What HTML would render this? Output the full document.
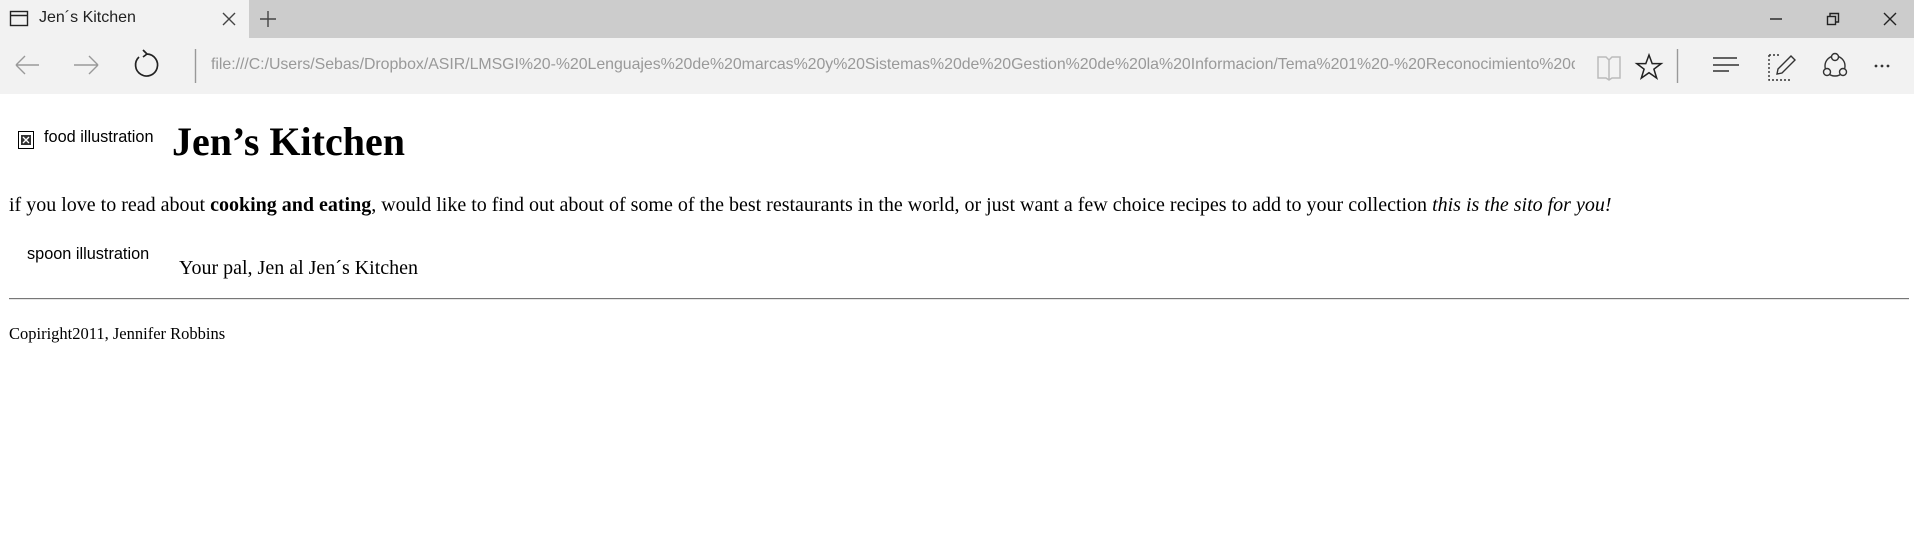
<!DOCTYPE html>
<html><head><meta charset="utf-8"><style>
body{margin:0;width:1914px;height:551px;background:#fff;position:relative;overflow:hidden;font-family:"Liberation Serif",serif;color:#000}
.a{position:absolute;white-space:nowrap}
.s{font-family:"Liberation Sans",sans-serif}
</style></head><body>
<div class="a" style="left:0;top:0;width:1914px;height:38px;background:#cccccc"></div>
<div class="a" style="left:0;top:0;width:249px;height:38px;background:#f2f2f2"></div>
<div class="a" style="left:0;top:38px;width:1914px;height:56px;background:#f2f2f2"></div>
<svg class="a" style="left:0;top:0" width="1914" height="94" fill="none" stroke-width="1.4">
<rect x="10.5" y="11.5" width="17" height="14" stroke="#222"/><line x1="10" y1="15.5" x2="28" y2="15.5" stroke="#222"/>
<path d="M223 13l12 12M235 13l-12 12" stroke="#444"/>
<path d="M268 11v16M260 19h16" stroke="#444"/>
<path d="M1770 19h12" stroke="#222"/>
<rect x="1827.5" y="16.5" width="8" height="8" stroke="#222"/><path d="M1830 16v-2.5h8.5v8.5h-2.5" stroke="#222"/>
<path d="M1884 13l12 12M1896 13l-12 12" stroke="#222"/>
<path d="M39 65h-23M16 65l9-9M16 65l9 9" stroke="#999"/>
<path d="M74 65h24M98 65l-9-9M98 65l-9 9" stroke="#999"/>
<path d="M139 57a11 11 0 1 0 8-3M147 54l-4-4M147 54l-4 3" stroke="#222" stroke-width="1.7"/>
<line x1="195.5" y1="49" x2="195.5" y2="83" stroke="#999"/>
<path d="M1598 57h8l3 3 3-3h8v21h-8l-3 2-3-2h-8zM1609 60v19" stroke="#bbb" stroke-width="1.5"/>
<path d="M1649 55l3.2 8.6h9l-7.3 5.5 2.8 9-7.7-5.4-7.7 5.4 2.8-9-7.3-5.5h9z" stroke="#222" stroke-width="1.5"/>
<line x1="1677.5" y1="49" x2="1677.5" y2="83" stroke="#999"/>
<path d="M1713 58h24M1713 65h26M1713 71h16" stroke="#333" stroke-width="1.5"/>
<path d="M1769 55v25h22M1769 55h12" stroke="#333" stroke-dasharray="2 2"/><path d="M1791 56l4 4-13 13-5 1 1-5z" stroke="#333" stroke-width="1.4"/>
<circle cx="1835" cy="66" r="10" stroke="#333" stroke-width="1.4"/><circle cx="1835" cy="57" r="3.5" fill="#f2f2f2" stroke="#333"/><circle cx="1827" cy="72" r="3.5" fill="#f2f2f2" stroke="#333"/><circle cx="1843" cy="72" r="3.5" fill="#f2f2f2" stroke="#333"/>
<g fill="#333" stroke="none"><circle cx="1876" cy="66" r="1.4"/><circle cx="1882" cy="66" r="1.4"/><circle cx="1888" cy="66" r="1.4"/></g>
</svg>
<div class="a s" style="left:39px;top:9px;font-size:16px;color:#222">Jen´s Kitchen</div>
<div class="a s" style="left:211px;top:56px;width:1364px;overflow:hidden;font-size:15.9px;letter-spacing:-0.03px;color:#999">file:///C:/Users/Sebas/Dropbox/ASIR/LMSGI%20-%20Lenguajes%20de%20marcas%20y%20Sistemas%20de%20Gestion%20de%20la%20Informacion/Tema%201%20-%20Reconocimiento%20de%20lenguajes</div>

<div class="a" style="left:18px;top:131px;width:16px;height:18px;border:1px solid #000;box-sizing:border-box;background:#fff"><div style="position:absolute;left:2px;top:3px;width:10px;height:10px;background:#333"></div><svg style="position:absolute;left:3px;top:4px" width="8" height="8"><path d="M1 1l6 6M7 1l-6 6" stroke="#fff" stroke-width="1.4"/></svg></div>
<div class="a s" style="left:44px;top:128px;font-size:16.3px">food illustration</div>
<div class="a" style="left:172px;top:119px;font-size:40px;font-weight:bold;line-height:46px">Jen’s Kitchen</div>
<div class="a" style="left:9px;top:193px;font-size:20px;line-height:24px">if you love to read about <b>cooking and eating</b>, would like to find out about of some of the best restaurants in the world, or just want a few choice recipes to add to your collection <i>this is the sito for you!</i></div>
<div class="a s" style="left:27px;top:245px;font-size:16.3px">spoon illustration</div>
<div class="a" style="left:179px;top:256px;font-size:20px;line-height:24px">Your pal, Jen al Jen´s Kitchen</div>
<div class="a" style="left:9px;top:298px;width:1900px;height:0;border-top:1px solid #777;border-bottom:1px solid #e6e6e6"></div>
<div class="a" style="left:9px;top:324px;font-size:16.5px;line-height:20px">Copiright2011, Jennifer Robbins</div>
</body></html>
